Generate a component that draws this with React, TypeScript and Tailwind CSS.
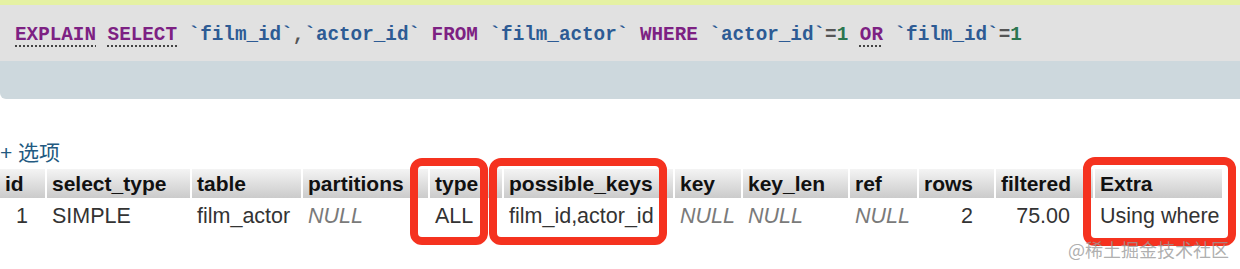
import React from "react";

const mono = { fontFamily: '"Liberation Mono", "Courier New", monospace' };

type Col = {
  label: string;
  value: string;
  w: string;
  kind?: "null" | "num";
  pad?: string;
};

const cols: Col[] = [
  { label: "id", value: "1", w: "w-[45px]", kind: "num", pad: "pl-[16px]" },
  { label: "select_type", value: "SIMPLE", w: "w-[143px]" },
  { label: "table", value: "film_actor", w: "w-[109px]" },
  { label: "partitions", value: "NULL", w: "w-[125px]", kind: "null" },
  { label: "type", value: "ALL", w: "w-[72px]" },
  { label: "possible_keys", value: "film_id,actor_id", w: "w-[169px]" },
  { label: "key", value: "NULL", w: "w-[66px]", kind: "null" },
  { label: "key_len", value: "NULL", w: "w-[105px]", kind: "null" },
  { label: "ref", value: "NULL", w: "w-[67px]", kind: "null" },
  { label: "rows", value: "2", w: "w-[75px]", kind: "num", pad: "pr-[21px]" },
  { label: "filtered", value: "75.00", w: "w-[97px]", kind: "num", pad: "pr-[23px]" },
  { label: "Extra", value: "Using where", w: "w-[127px]" },
];

function Kw({ children }: { children: React.ReactNode }) {
  return (
    <span className="text-[#7d2183] underline decoration-dotted decoration-[#444] decoration-[2px] underline-offset-[5px]">
      {children}
    </span>
  );
}

function Id({ children }: { children: React.ReactNode }) {
  return <span className="text-[#2d5b94]">{children}</span>;
}

function Num({ children }: { children: React.ReactNode }) {
  return <span className="text-[#2b7650]">{children}</span>;
}

export default function App() {
  return (
    <div
      className="relative w-[1240px] h-[269px] overflow-hidden bg-white"
      style={{ fontFamily: '"Liberation Sans", Arial, sans-serif' }}
    >
      {/* query box */}
      <div className="h-[5px] bg-[#e5f1a3]" />
      <div className="h-[56px] bg-[#e1e1e1] pl-[15px] pt-[19px]">
        <div className="text-[19.3px] font-bold leading-[22px] text-[#555] whitespace-pre" style={mono}>
          <Kw>EXPLAIN</Kw> <Kw>SELECT</Kw> <Id>`film_id`</Id>,<Id>`actor_id`</Id>{" "}
          <span className="text-[#7d2183]">FROM</span> <Id>`film_actor`</Id>{" "}
          <span className="text-[#7d2183]">WHERE</span> <Id>`actor_id`</Id>=<Num>1</Num>{" "}
          <Kw>OR</Kw> <Id>`film_id`</Id>=<Num>1</Num>
        </div>
      </div>
      <div className="h-[38px] bg-[#cdd8dd] rounded-bl-[6px]" />

      {/* options link */}
      <div className="mt-[42px] h-[28px] text-[21px] leading-[24px] text-[#235a81]" style={{ fontFamily: '"Liberation Sans", "Noto Sans CJK SC", sans-serif' }}>
        + 选项
      </div>

      {/* result table */}
      <div className="flex gap-[2px]">
        {cols.map((c) => (
          <div
            key={c.label}
            className={`${c.w} h-[29px] bg-gradient-to-b from-[#f4f4f4] to-[#cbcbcb] pl-[5px] text-[21px] font-bold leading-[29px] text-[#111] whitespace-nowrap overflow-hidden`}
          >
            {c.label}
          </div>
        ))}
      </div>
      <div className="flex gap-[2px] mt-[3px]">
        {cols.map((c) => (
          <div
            key={c.label}
            className={`${c.w} h-[30px] text-[21.5px] leading-[30px] whitespace-nowrap ${
              c.kind === "null" ? "italic text-[#7a7a7a] pl-[5px]" : "text-[#333]"
            } ${c.kind === "num" ? (c.pad?.startsWith("pr") ? `text-right ${c.pad}` : c.pad) : ""} ${
              !c.kind ? "pl-[5px]" : ""
            }`}
          >
            {c.value}
          </div>
        ))}
      </div>

      {/* red annotations */}
      <div className="absolute left-[410px] top-[158px] w-[78px] h-[87px] border-[8px] border-[#f5321f] rounded-[12px]" />
      <div className="absolute left-[489px] top-[158px] w-[178px] h-[87px] border-[8px] border-[#f5321f] rounded-[12px]" />
      <div className="absolute left-[1083px] top-[157px] w-[153px] h-[89px] border-[8px] border-[#f5321f] rounded-[12px]" />

      {/* watermark */}
      <div
        className="absolute left-[1068px] top-[237px] text-[18px] leading-[24px] text-[#9a9a9a]/80"
        style={{ fontFamily: '"Noto Sans CJK SC", sans-serif' }}
      >
        @稀土掘金技术社区
      </div>
    </div>
  );
}
